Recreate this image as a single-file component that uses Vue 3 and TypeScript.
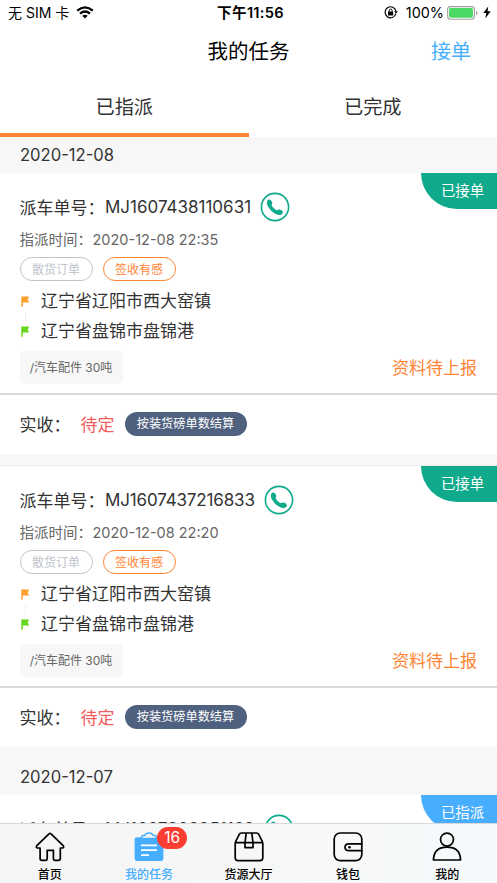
<script setup lang="ts">
interface Task {
  no: string
  time: string
  tags: string[]
  from: string
  to: string
  goods: string
  report: string
  price: string
  settle: string
  status: string
  tone: 'accepted' | 'assigned'
}
interface Group {
  date: string
  tasks: Task[]
}

const base = {
  tags: ['散货订单', '签收有感'],
  from: '辽宁省辽阳市西大窑镇',
  to: '辽宁省盘锦市盘锦港',
  goods: '/汽车配件 30吨',
  report: '资料待上报',
  price: '待定',
  settle: '按装货磅单数结算',
}

const groups: Group[] = [
  {
    date: '2020-12-08',
    tasks: [
      { ...base, no: 'MJ1607438110631', time: '2020-12-08 22:35', status: '已接单', tone: 'accepted' },
      { ...base, no: 'MJ1607437216833', time: '2020-12-08 22:20', status: '已接单', tone: 'accepted' },
    ],
  },
  {
    date: '2020-12-07',
    tasks: [
      { ...base, no: 'MJ1607302951169', time: '2020-12-07 08:49', status: '已指派', tone: 'assigned' },
    ],
  },
]

const tabs = ['已指派', '已完成']
const nav = [
  { key: 'home', label: '首页' },
  { key: 'task', label: '我的任务' },
  { key: 'hall', label: '货源大厅' },
  { key: 'wallet', label: '钱包' },
  { key: 'me', label: '我的' },
]
</script>

<template>
  <div class="screen">
    <div class="status">
      <div class="carrier">
        <span>无 SIM 卡</span>
        <svg class="wifi" width="18" height="13" viewBox="0 0 18 13" fill="none" stroke="#000" stroke-width="2.3">
          <path d="M1.2 4.7Q9-2 16.8 4.7" />
          <path d="M4 7.7Q9 3.4 14 7.7" />
          <path d="M6.3 9.7Q9 7.7 11.7 9.7L9 12.6Z" fill="#000" stroke="none" />
        </svg>
      </div>
      <div class="clock">下午11:56</div>
      <div class="power">
        <svg width="14" height="13" viewBox="0 0 14 13" fill="none" stroke="#000">
          <path d="M11.9 7.7A5.5 5.5 0 1 1 12 5.3" stroke-width="1.2" />
          <path d="M10.2 5.3h3.6L12 7.8z" fill="#000" stroke="none" />
          <rect x="4" y="5.5" width="5.2" height="4" rx=".5" fill="#000" stroke="none" />
          <path d="M5.1 5.8V4.6a1.5 1.5 0 0 1 3 0v1.2" stroke-width="1" />
        </svg>
        <span class="percent">100%</span>
        <svg width="31" height="14" viewBox="0 0 31 14">
          <rect x=".6" y=".6" width="26.8" height="12.6" rx="3" fill="#fff" stroke="#a0a0a0" stroke-width="1.1" />
          <rect x="2" y="2" width="24" height="9.8" rx="1.8" fill="#4cd964" />
          <path d="M29 4.8q1.6.7 1.6 2.1T29 9.1z" fill="#a0a0a0" />
        </svg>
        <svg class="bolt" width="8" height="13" viewBox="0 0 8 13"><path d="M5.2.5.3 7h3L2.3 12.4 7.7 5.3H4.6z" /></svg>
      </div>
    </div>

    <header class="title-bar">
      <h1>我的任务</h1>
      <a class="take">接单</a>
    </header>

    <div class="tabs">
      <div v-for="(tab, i) in tabs" :key="tab" class="tab" :class="{ on: i === 0 }">{{ tab }}</div>
    </div>

    <main class="list">
      <section v-for="group in groups" :key="group.date">
        <div class="date">{{ group.date }}</div>
        <article v-for="(task, i) in group.tasks" :key="task.no" class="card" :class="{ next: i > 0 }">
          <div class="ribbon" :class="task.tone">{{ task.status }}</div>
          <div class="number">
            <span>派车单号：</span><span class="no">{{ task.no }}</span>
            <svg class="phone" width="30" height="30" viewBox="0 0 30 30">
              <circle cx="15" cy="15" r="13.6" fill="none" stroke="#0fa98c" stroke-width="1.6" />
              <path d="M7.1 9.2C7.6 7.8 9.5 7 10.8 8.2C12 9.3 12.9 11 12 12.1C11.4 12.9 11.7 13.8 12.5 14.8C13.5 16.1 15 17.4 16.3 18C17.1 18.4 17.7 18 18.6 17.6C20 17.1 21.9 18.2 22.7 19.4C23.4 20.7 22.3 22.3 20.8 22.8C18.7 23.5 15.4 22.2 12.9 20.2C10.2 18 7.7 14.9 7 12C6.8 11 6.8 10 7.1 9.2Z" fill="#0fa98c" />
            </svg>
          </div>
          <div class="time"><span>指派时间：</span><span class="stamp">{{ task.time }}</span></div>
          <div class="tags">
            <span v-for="(tag, t) in task.tags" :key="tag" class="tag" :class="{ hot: t === 1 }">{{ tag }}</span>
          </div>
          <div class="route">
            <div class="place">
              <svg width="9" height="11" viewBox="0 0 9 11" fill="#ff9f2e"><path d="M.3.4h7.8L6.7 3.4l1.4 3H1.8v4.3H.3z" /></svg>
              <span>{{ task.from }}</span>
            </div>
            <div class="link"></div>
            <div class="place">
              <svg width="9" height="11" viewBox="0 0 9 11" fill="#66d61c"><path d="M.3.4h7.8L6.7 3.4l1.4 3H1.8v4.3H.3z" /></svg>
              <span>{{ task.to }}</span>
            </div>
          </div>
          <div class="cargo">
            <span class="goods">{{ task.goods }}</span>
            <span class="report">{{ task.report }}</span>
          </div>
          <footer class="pay">
            <span class="label">实收：</span>
            <span class="price">{{ task.price }}</span>
            <span class="settle">{{ task.settle }}</span>
          </footer>
        </article>
      </section>
    </main>

    <nav class="nav">
      <div v-for="item in nav" :key="item.key" class="item" :class="{ active: item.key === 'task' }">
        <div class="icon">
          <svg width="30" height="30" viewBox="0 0 30 30" fill="none" stroke="currentColor" stroke-width="1.7" stroke-linejoin="round" stroke-linecap="round">
            <path v-if="item.key === 'home'" d="M14 1.8Q15 1 16 1.8L28.2 13.6Q29.4 15.5 27.6 16H25.3V26.5Q25.3 28.4 23.4 28.4H19.9Q18.4 28.4 18.4 26.8V18.4H12.2V26.8Q12.2 28.4 10.7 28.4H7Q5.1 28.4 5.1 26.5V16H2.4Q.6 15.5 1.8 13.6Z" />
            <g v-else-if="item.key === 'task'">
              <path d="M3 5.2H27Q29.4 5.2 29.4 7.6V26.5Q29.4 29 27 29H3Q.6 29 .6 26.5V7.6Q.6 5.2 3 5.2Z" fill="currentColor" stroke="none" />
              <path d="M7.8 6.6V4.6Q7.8 3.6 8.8 3.6H10.5Q11.8 1.1 15 1.1T19.5 3.6H21.2Q22.2 3.6 22.2 4.6V6.6Z" fill="#f5f5f5" stroke="currentColor" stroke-width="1.5" />
              <path d="M7 13.3H23M7 18.2H23M7 23.2H15" stroke="#fff" stroke-width="1.7" stroke-linecap="butt" />
            </g>
            <g v-else-if="item.key === 'hall'">
              <path d="M7.4 1H22.6Q24 1 24.6 2.2L28.4 9.7Q28.8 10.3 28.8 11.4V25.8Q28.8 28.6 26 28.6H4Q1.2 28.6 1.2 25.8V11.4Q1.2 10.3 1.6 9.7L5.4 2.2Q6 1 7.4 1ZM1.6 10.6H28.4M12.2 1.2 11 10.6V15.6H19V10.6L17.8 1.2" />
            </g>
            <g v-else-if="item.key === 'wallet'">
              <rect x="1.2" y="1" width="27.6" height="27.6" rx="6" />
              <path d="M28.8 11.8H15.9Q12 11.8 12 15.2T15.9 18.6H28.8" />
              <circle cx="16.5" cy="15.2" r="1.3" fill="currentColor" stroke="none" />
            </g>
            <g v-else>
              <circle cx="15" cy="7.6" r="6.5" />
              <path d="M1.5 28V27Q2.2 15.2 15 15.2T28.5 27V28Z" />
            </g>
          </svg>
          <span v-if="item.key === 'task'" class="badge">16</span>
        </div>
        <span class="name">{{ item.label }}</span>
      </div>
    </nav>
  </div>
</template>

<style>
body {
  margin: 0;
}
</style>

<style scoped>
.screen {
  display: flex;
  flex-direction: column;
  width: 497px;
  height: 883px;
  overflow: hidden;
  background: #fff;
  color: #333;
  font-family: Inter, "Noto Sans CJK SC", sans-serif;
  font-size: 17px;
  white-space: nowrap;
}
.screen * {
  box-sizing: border-box;
}
.status {
  display: grid;
  grid-template-columns: 1fr auto 1fr;
  align-items: center;
  height: 25px;
  padding: 0 6px 0 8px;
  color: #000;
  font-size: 14px;
}
.carrier,
.power {
  display: flex;
  align-items: center;
}
.carrier {
  padding-bottom: 1px;
}
.power {
  justify-content: flex-end;
}
.wifi {
  margin-left: 7px;
}
.clock {
  font-size: 14.6px;
  font-weight: 600;
  letter-spacing: 0.3px;
  line-height: 24px;
  transform: translateX(1px);
}
.percent {
  margin: 0 3px 0 8px;
  font-size: 14.4px;
}
.bolt {
  margin-left: 5px;
}
.title-bar {
  display: grid;
  grid-template-columns: 1fr auto 1fr;
  align-items: center;
  height: 52px;
  padding: 0 25px 2px;
}
.title-bar h1 {
  grid-column: 2;
  margin: 0;
  color: #000;
  font-size: 20.5px;
  font-weight: 400;
}
.take {
  justify-self: end;
  margin-right: 1px;
  color: #47aeff;
  font-size: 20px;
}
.tabs {
  display: flex;
  height: 60px;
}
.tab {
  flex: 1;
  border-bottom: 4px solid transparent;
  text-align: center;
  font-size: 19.2px;
  line-height: 61px;
}
.tab.on {
  border-color: #ff8534;
}
.list {
  flex: 1;
  min-height: 0;
  overflow: hidden;
}
.date {
  height: 36px;
  padding-left: 20px;
  background: #f7f7f7;
  line-height: 37px;
  font-size: 16.6px;
}
.card {
  position: relative;
  height: 293px;
  padding: 18px 20px 0 19.5px;
  border-bottom: 12px solid #f7f7f7;
}
.card.next {
  box-shadow: 0 -1px #eee;
}
.no {
  margin-left: 0.5px;
}
.card.next .no {
  letter-spacing: -0.15px;
}
.ribbon {
  position: absolute;
  top: 0;
  right: 0;
  width: 76px;
  height: 36px;
  padding-left: 7px;
  border-bottom-left-radius: 36px;
  color: #fff;
  font-size: 14.4px;
  line-height: 36px;
  text-align: center;
}
.accepted {
  background: #0fa98c;
}
.assigned {
  background: #47aeff;
}
.number {
  display: flex;
  align-items: center;
  height: 31px;
}
.phone {
  margin-left: 9px;
}
.time {
  height: 35px;
  color: #666;
  font-size: 14.5px;
  line-height: 35px;
}
.stamp {
  margin-left: 0.5px;
}
.tags {
  display: flex;
  gap: 10px;
  height: 24px;
}
.tag {
  width: 73px;
  border: 1.2px solid #c0c4cc;
  border-radius: 12px;
  color: #c0c4cc;
  font-size: 12px;
  line-height: 23px;
  text-align: center;
}
.tag.hot {
  border-color: #ff8534;
  color: #ff8534;
}
.route {
  padding-top: 10px;
}
.place {
  display: flex;
  align-items: center;
  gap: 11px;
  height: 20px;
  padding-left: 1.5px;
  line-height: 20px;
}
.link {
  width: 1px;
  height: 10px;
  margin-left: 5.5px;
  background: #f0f0f0;
}
.cargo {
  display: flex;
  align-items: center;
  justify-content: space-between;
  height: 33px;
  margin-top: 10px;
}
.goods {
  width: 103px;
  border-radius: 5px;
  background: #f7f7f7;
  color: #666;
  font-size: 12px;
  line-height: 33px;
  text-align: center;
}
.report {
  padding-bottom: 2px;
  color: #ff8534;
}
.pay {
  display: flex;
  align-items: center;
  height: 59px;
  margin: 9px -20px 0 -19.5px;
  padding: 0 20px 0 19.5px;
  border-top: 2px solid #d9d9d9;
}
.price {
  margin-left: 10px;
  color: #f05b5b;
}
.settle {
  width: 122px;
  height: 24px;
  margin-left: 10px;
  border-radius: 12px;
  background: #50617f;
  color: #fff;
  font-size: 12.2px;
  line-height: 24px;
  text-align: center;
}
.nav {
  display: flex;
  height: 60px;
  border-top: 1px solid #d8d8d8;
  background: linear-gradient(90deg, #f5f5f5, #f7f8f8 70%, #f5fafc);
}
.item {
  display: flex;
  flex: 1;
  flex-direction: column;
  align-items: center;
  padding-top: 8px;
  color: #000;
}
.item.active {
  color: #47aeff;
}
.icon {
  position: relative;
  height: 30px;
}
.badge {
  position: absolute;
  top: -5px;
  left: 23px;
  width: 30px;
  height: 22px;
  border-radius: 11px;
  background: #fc3d32;
  color: #fff;
  font-size: 15.5px;
  line-height: 22px;
  text-align: center;
}
.name {
  margin-top: 5px;
  font-size: 12px;
  font-weight: 500;
  line-height: 16px;
}
</style>
